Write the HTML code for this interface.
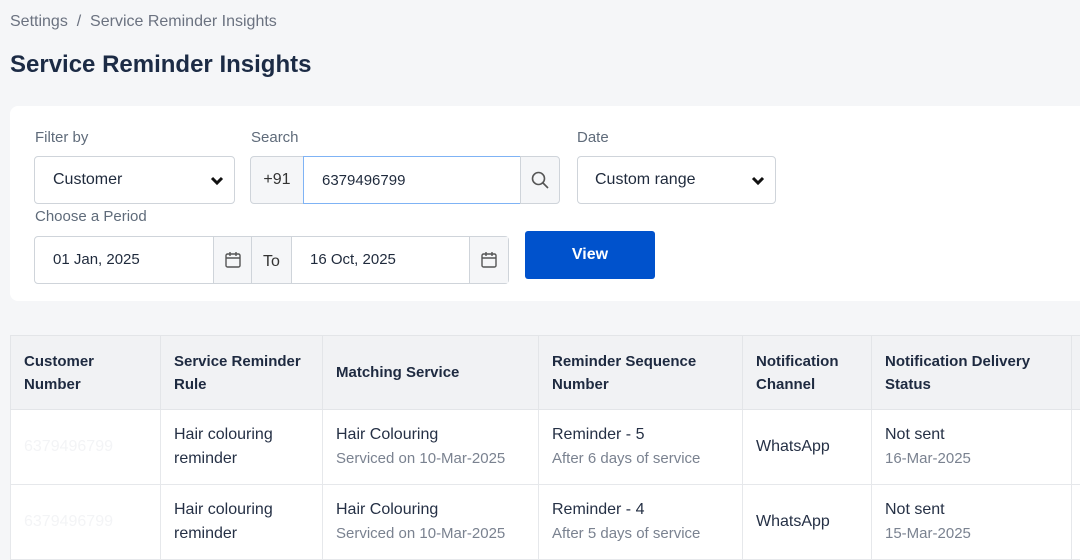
<!DOCTYPE html>
<html><head><meta charset="utf-8"><style>
*{box-sizing:border-box;margin:0;padding:0}
body{width:1080px;height:557px;overflow:hidden;background:#f5f6f8;font-family:"Liberation Sans",sans-serif;color:#1f2a3c;position:relative}
.a{position:absolute}
.crumb{left:10px;top:13px;font-size:16px;color:#6b7280}
h1{position:absolute;left:10px;top:51px;font-size:24px;font-weight:bold;color:#1c2b45}
.card{left:10px;top:106px;width:1090px;height:195px;background:#fff;border-radius:8px}
.lbl{font-size:15px;color:#5f6b7a}
.box{border:1px solid #cfd4da;background:#fff;border-radius:4px;font-size:16px;display:flex;align-items:center}
.add{background:#f5f6f8;border:1px solid #cfd4da;display:flex;align-items:center;justify-content:center;font-size:16px;color:#333}
.chev{position:absolute;right:10px;top:19px}
table{position:absolute;left:10px;top:335px;border-collapse:collapse;background:#fff;width:1080px;table-layout:fixed}
th{background:#f1f2f4;text-align:left;font-size:15px;font-weight:bold;color:#1e2a40;padding:0 13px;height:74px;border:1px solid #e3e5e8;line-height:23px}
td{font-size:16px;padding:0 13px;height:75px;border:1px solid #e6e8eb;line-height:24px;color:#253045}
.s{font-size:15px;color:#7a8290;line-height:24px}
.f{color:#f3f4f6}
</style></head><body>
<div class="a crumb">Settings &nbsp;/&nbsp; Service Reminder Insights</div>
<h1>Service Reminder Insights</h1>
<div class="a card"></div>
<div class="a lbl" style="left:35px;top:129px">Filter by</div>
<div class="a lbl" style="left:251px;top:129px">Search</div>
<div class="a lbl" style="left:577px;top:129px">Date</div>
<div class="a box" style="left:34px;top:156px;width:201px;height:48px;padding-left:18px">Customer<svg class="chev" width="14" height="10" viewBox="0 0 14 10"><path d="M2 2l5 5 5-5" fill="none" stroke="#111" stroke-width="3"/></svg></div>
<div class="a add" style="left:250px;top:156px;width:54px;height:48px;border-radius:4px 0 0 4px">+91</div>
<div class="a box" style="left:303px;top:156px;width:218px;height:48px;border-color:#7fb3f5;border-radius:0;padding-left:18px;font-size:15px">6379496799</div>
<div class="a add" style="left:520px;top:156px;width:40px;height:48px;border-radius:0 4px 4px 0"><svg width="20" height="20" viewBox="0 0 20 20"><circle cx="8.5" cy="8.5" r="6" fill="none" stroke="#555" stroke-width="1.6"/><path d="M13 13l5 5" stroke="#555" stroke-width="1.6"/></svg></div>
<div class="a box" style="left:577px;top:156px;width:199px;height:48px;padding-left:17px">Custom range<svg class="chev" width="14" height="10" viewBox="0 0 14 10"><path d="M2 2l5 5 5-5" fill="none" stroke="#111" stroke-width="3"/></svg></div>
<div class="a lbl" style="left:35px;top:208px">Choose a Period</div>
<div class="a box" style="left:34px;top:236px;width:475px;height:48px;"></div>
<div class="a" style="left:53px;top:251px;font-size:15px">01 Jan, 2025</div>
<div class="a add" style="left:213px;top:237px;width:39px;height:46px;border-width:0 1px"><svg width="18" height="18" viewBox="0 0 18 18"><rect x="2" y="3" width="14" height="13" rx="1.5" fill="none" stroke="#555" stroke-width="1.4"/><path d="M2 7h14M6 1v4M12 1v4" stroke="#555" stroke-width="1.4"/></svg></div>
<div class="a add" style="left:251px;top:237px;width:41px;height:46px;border-width:0 1px;padding-top:3px">To</div>
<div class="a" style="left:310px;top:251px;font-size:15px">16 Oct, 2025</div>
<div class="a add" style="left:469px;top:237px;width:39px;height:46px;border-width:0 0 0 1px"><svg width="18" height="18" viewBox="0 0 18 18"><rect x="2" y="3" width="14" height="13" rx="1.5" fill="none" stroke="#555" stroke-width="1.4"/><path d="M2 7h14M6 1v4M12 1v4" stroke="#555" stroke-width="1.4"/></svg></div>
<div class="a" style="left:525px;top:231px;width:130px;height:48px;background:#0052cc;border-radius:3px;color:#fff;font-weight:bold;font-size:16px;display:flex;align-items:center;justify-content:center">View</div>
<table>
<colgroup><col style="width:150px"><col style="width:162px"><col style="width:216px"><col style="width:204px"><col style="width:129px"><col style="width:200px"><col></colgroup>
<tr><th>Customer<br>Number</th><th>Service Reminder<br>Rule</th><th>Matching Service</th><th>Reminder Sequence<br>Number</th><th>Notification<br>Channel</th><th>Notification Delivery<br>Status</th><th></th></tr>
<tr><td class="f">6379496799</td><td>Hair colouring<br>reminder</td><td>Hair Colouring<br><span class="s">Serviced on 10-Mar-2025</span></td><td>Reminder - 5<br><span class="s">After 6 days of service</span></td><td>WhatsApp</td><td>Not sent<br><span class="s">16-Mar-2025</span></td><td></td></tr>
<tr><td class="f">6379496799</td><td>Hair colouring<br>reminder</td><td>Hair Colouring<br><span class="s">Serviced on 10-Mar-2025</span></td><td>Reminder - 4<br><span class="s">After 5 days of service</span></td><td>WhatsApp</td><td>Not sent<br><span class="s">15-Mar-2025</span></td><td></td></tr>
</table>
</body></html>
